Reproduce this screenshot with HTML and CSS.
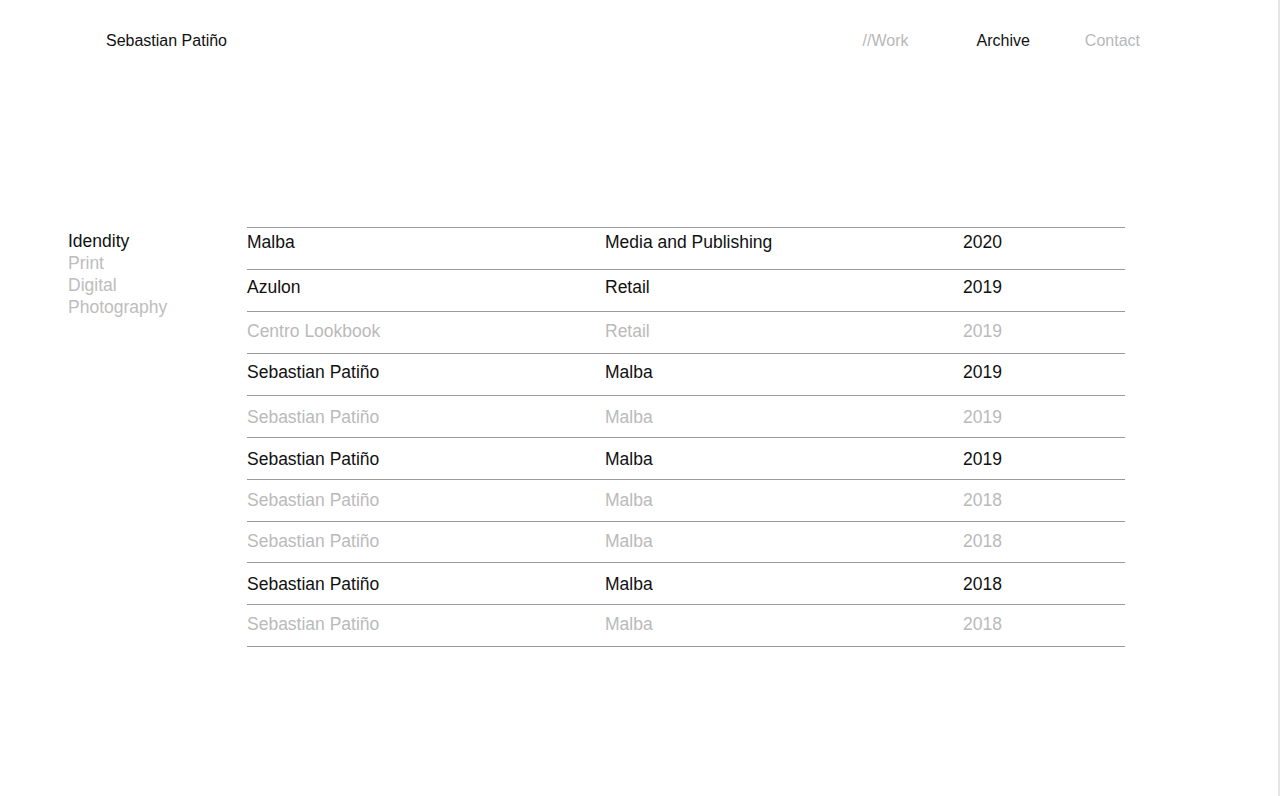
FILE: index.html
```html
<!DOCTYPE html>
<html lang="es">
<head>
<meta charset="utf-8">
<title>Sebastian Patiño — Archive</title>
<link rel="stylesheet" href="styles.css">
</head>
<body>
<div class="page">
  <header class="header">
    <div class="brand">Sebastian Patiño</div>
    <nav class="nav">
      <a class="nav-item muted work" href="#">//Work</a>
      <a class="nav-item archive" href="#">Archive</a>
      <a class="nav-item muted" href="#">Contact</a>
    </nav>
  </header>
  <main class="main">
    <ul class="filters">
      <li class="filter">Idendity</li>
      <li class="filter muted">Print</li>
      <li class="filter muted">Digital</li>
      <li class="filter muted">Photography</li>
    </ul>
    <div class="table">
      <div class="row first"><span>Malba</span><span>Media and Publishing</span><span>2020</span></div>
      <div class="row second"><span>Azulon</span><span>Retail</span><span>2019</span></div>
      <div class="row third muted"><span>Centro Lookbook</span><span>Retail</span><span>2019</span></div>
      <div class="row fourth"><span>Sebastian Patiño</span><span>Malba</span><span>2019</span></div>
      <div class="row muted"><span>Sebastian Patiño</span><span>Malba</span><span>2019</span></div>
      <div class="row sixth"><span>Sebastian Patiño</span><span>Malba</span><span>2019</span></div>
      <div class="row muted up"><span>Sebastian Patiño</span><span>Malba</span><span>2018</span></div>
      <div class="row muted up short"><span>Sebastian Patiño</span><span>Malba</span><span>2018</span></div>
      <div class="row ninth"><span>Sebastian Patiño</span><span>Malba</span><span>2018</span></div>
      <div class="row muted last"><span>Sebastian Patiño</span><span>Malba</span><span>2018</span></div>
    </div>
  </main>
</div>
</body>
</html>
```
FILE: styles.css
```css
* { box-sizing: border-box; }
html, body { margin: 0; padding: 0; background: #fff; }
body {
  font-family: "Liberation Sans", Arial, sans-serif;
  color: #111;
}
.page {
  width: 1280px;
  height: 796px;
  border-right: 2px solid #e6e6e6;
  overflow: hidden;
}
.header {
  display: flex;
  align-items: center;
  justify-content: space-between;
  padding: 31px 138px 0 106px;
  height: 50px;
  font-size: 16px;
}
.brand { color: #111; line-height: 18px; }
.nav { display: flex; }
.nav-item {
  color: #111;
  text-decoration: none;
  line-height: 18px;
}
.nav-item.work { margin-right: 68px; }
.nav-item.archive { margin-right: 55px; }
.nav-item.muted { color: #b8b8b8; }
.main {
  display: flex;
  padding: 177px 0 0 68px;
}
.filters {
  list-style: none;
  margin: 0;
  padding: 3px 0 0;
  width: 179px;
  font-size: 17.5px;
  line-height: 22px;
}
.filter { color: #111; }
.filter.muted { color: #bdbdbd; }
.table {
  width: 878px;
  border-top: 1px solid #9a9a9a;
}
.row {
  display: grid;
  grid-template-columns: 358px 358px 162px;
  height: 42px;
  align-items: center;
  border-bottom: 1px solid #9a9a9a;
  font-size: 17.5px;
  line-height: 20px;
  color: #111;
}
.row.muted { color: #bababa; }
.row.first { align-items: start; padding-top: 4px; }
.row.second { padding-bottom: 7px; }
.row.third { padding-bottom: 4px; }
.row.fourth { padding-bottom: 5px; }
.row.sixth { padding-top: 1px; }
.row.up { padding-bottom: 2px; }
.row.short { height: 41px; }
.row.ninth { padding-top: 1px; }
.row.last { padding-bottom: 4px; }
```
